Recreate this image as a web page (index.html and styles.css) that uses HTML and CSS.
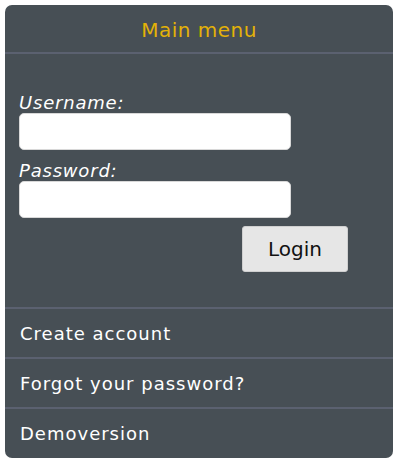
FILE: index.html
```html
<!DOCTYPE html>
<html lang="en">
<head>
    <meta charset="UTF-8">
    <meta name="viewport" content="width=device-width, initial-scale=1">
    <title>Main menu</title>
    <link rel="stylesheet" href="styles.css">
</head>
<body>
<div class="menu">
    <div class="menu-title">Main menu</div>
    <form class="login-form">
        <label class="field-label" for="username">Username:</label>
        <input class="field-input" type="text" id="username">
        <label class="field-label" for="password">Password:</label>
        <input class="field-input" type="password" id="password">
        <div class="form-actions">
            <button type="button" class="login-button">Login</button>
        </div>
    </form>
    <a class="menu-item" href="#">Create account</a>
    <a class="menu-item" href="#">Forgot your password?</a>
    <a class="menu-item" href="#">Demoversion</a>
</div>
</body>
</html>
```

FILE: styles.css
```css
* {
    margin: 0;
    padding: 0;
    box-sizing: border-box;
}

body {
    padding: 5px 7px 8px 5px;
    background: #ffffff;
    font-family: "DejaVu Sans", Verdana, sans-serif;
}

.menu {
    background-color: #474f55;
    border-radius: 7px;
    height: 453px;
    display: flex;
    flex-direction: column;
    overflow: hidden;
}

.menu-title {
    flex-shrink: 0;
    height: 49px;
    border-bottom: 2px solid #5b6170;
    color: #e3b208;
    font-size: 20px;
    letter-spacing: 0.5px;
    text-align: center;
    padding-top: 13px;
}

.login-form {
    flex-shrink: 0;
    display: flex;
    flex-direction: column;
    align-items: flex-start;
    padding: 39px 14px 0 14px;
    height: 255px;
    border-bottom: 2px solid #5b6170;
}

.field-label {
    color: #ffffff;
    font-style: italic;
    font-size: 18px;
    letter-spacing: 0.8px;
    line-height: 19px;
    margin-bottom: 1px;
}

.field-input {
    width: 272px;
    height: 37px;
    border: 1px solid #d8d8d8;
    border-radius: 5px;
    background: #ffffff;
    margin-bottom: 11px;
    outline: none;
}

.form-actions {
    align-self: stretch;
    display: flex;
    padding-left: 223px;
    margin-top: -3px;
}

.login-button {
    width: 106px;
    height: 46px;
    background-color: #e6e6e6;
    border: 1px solid #cfcfcf;
    border-radius: 3px;
    color: #111111;
    font-family: "DejaVu Sans", Verdana, sans-serif;
    font-size: 20px;
}

.menu-item {
    flex-shrink: 0;
    display: block;
    height: 50px;
    padding: 14px 0 0 15px;
    color: #ffffff;
    text-decoration: none;
    font-size: 18px;
    letter-spacing: 1px;
    border-bottom: 2px solid #5b6170;
}

.menu-item:last-child {
    flex: 1;
    border-bottom: none;
}
```
